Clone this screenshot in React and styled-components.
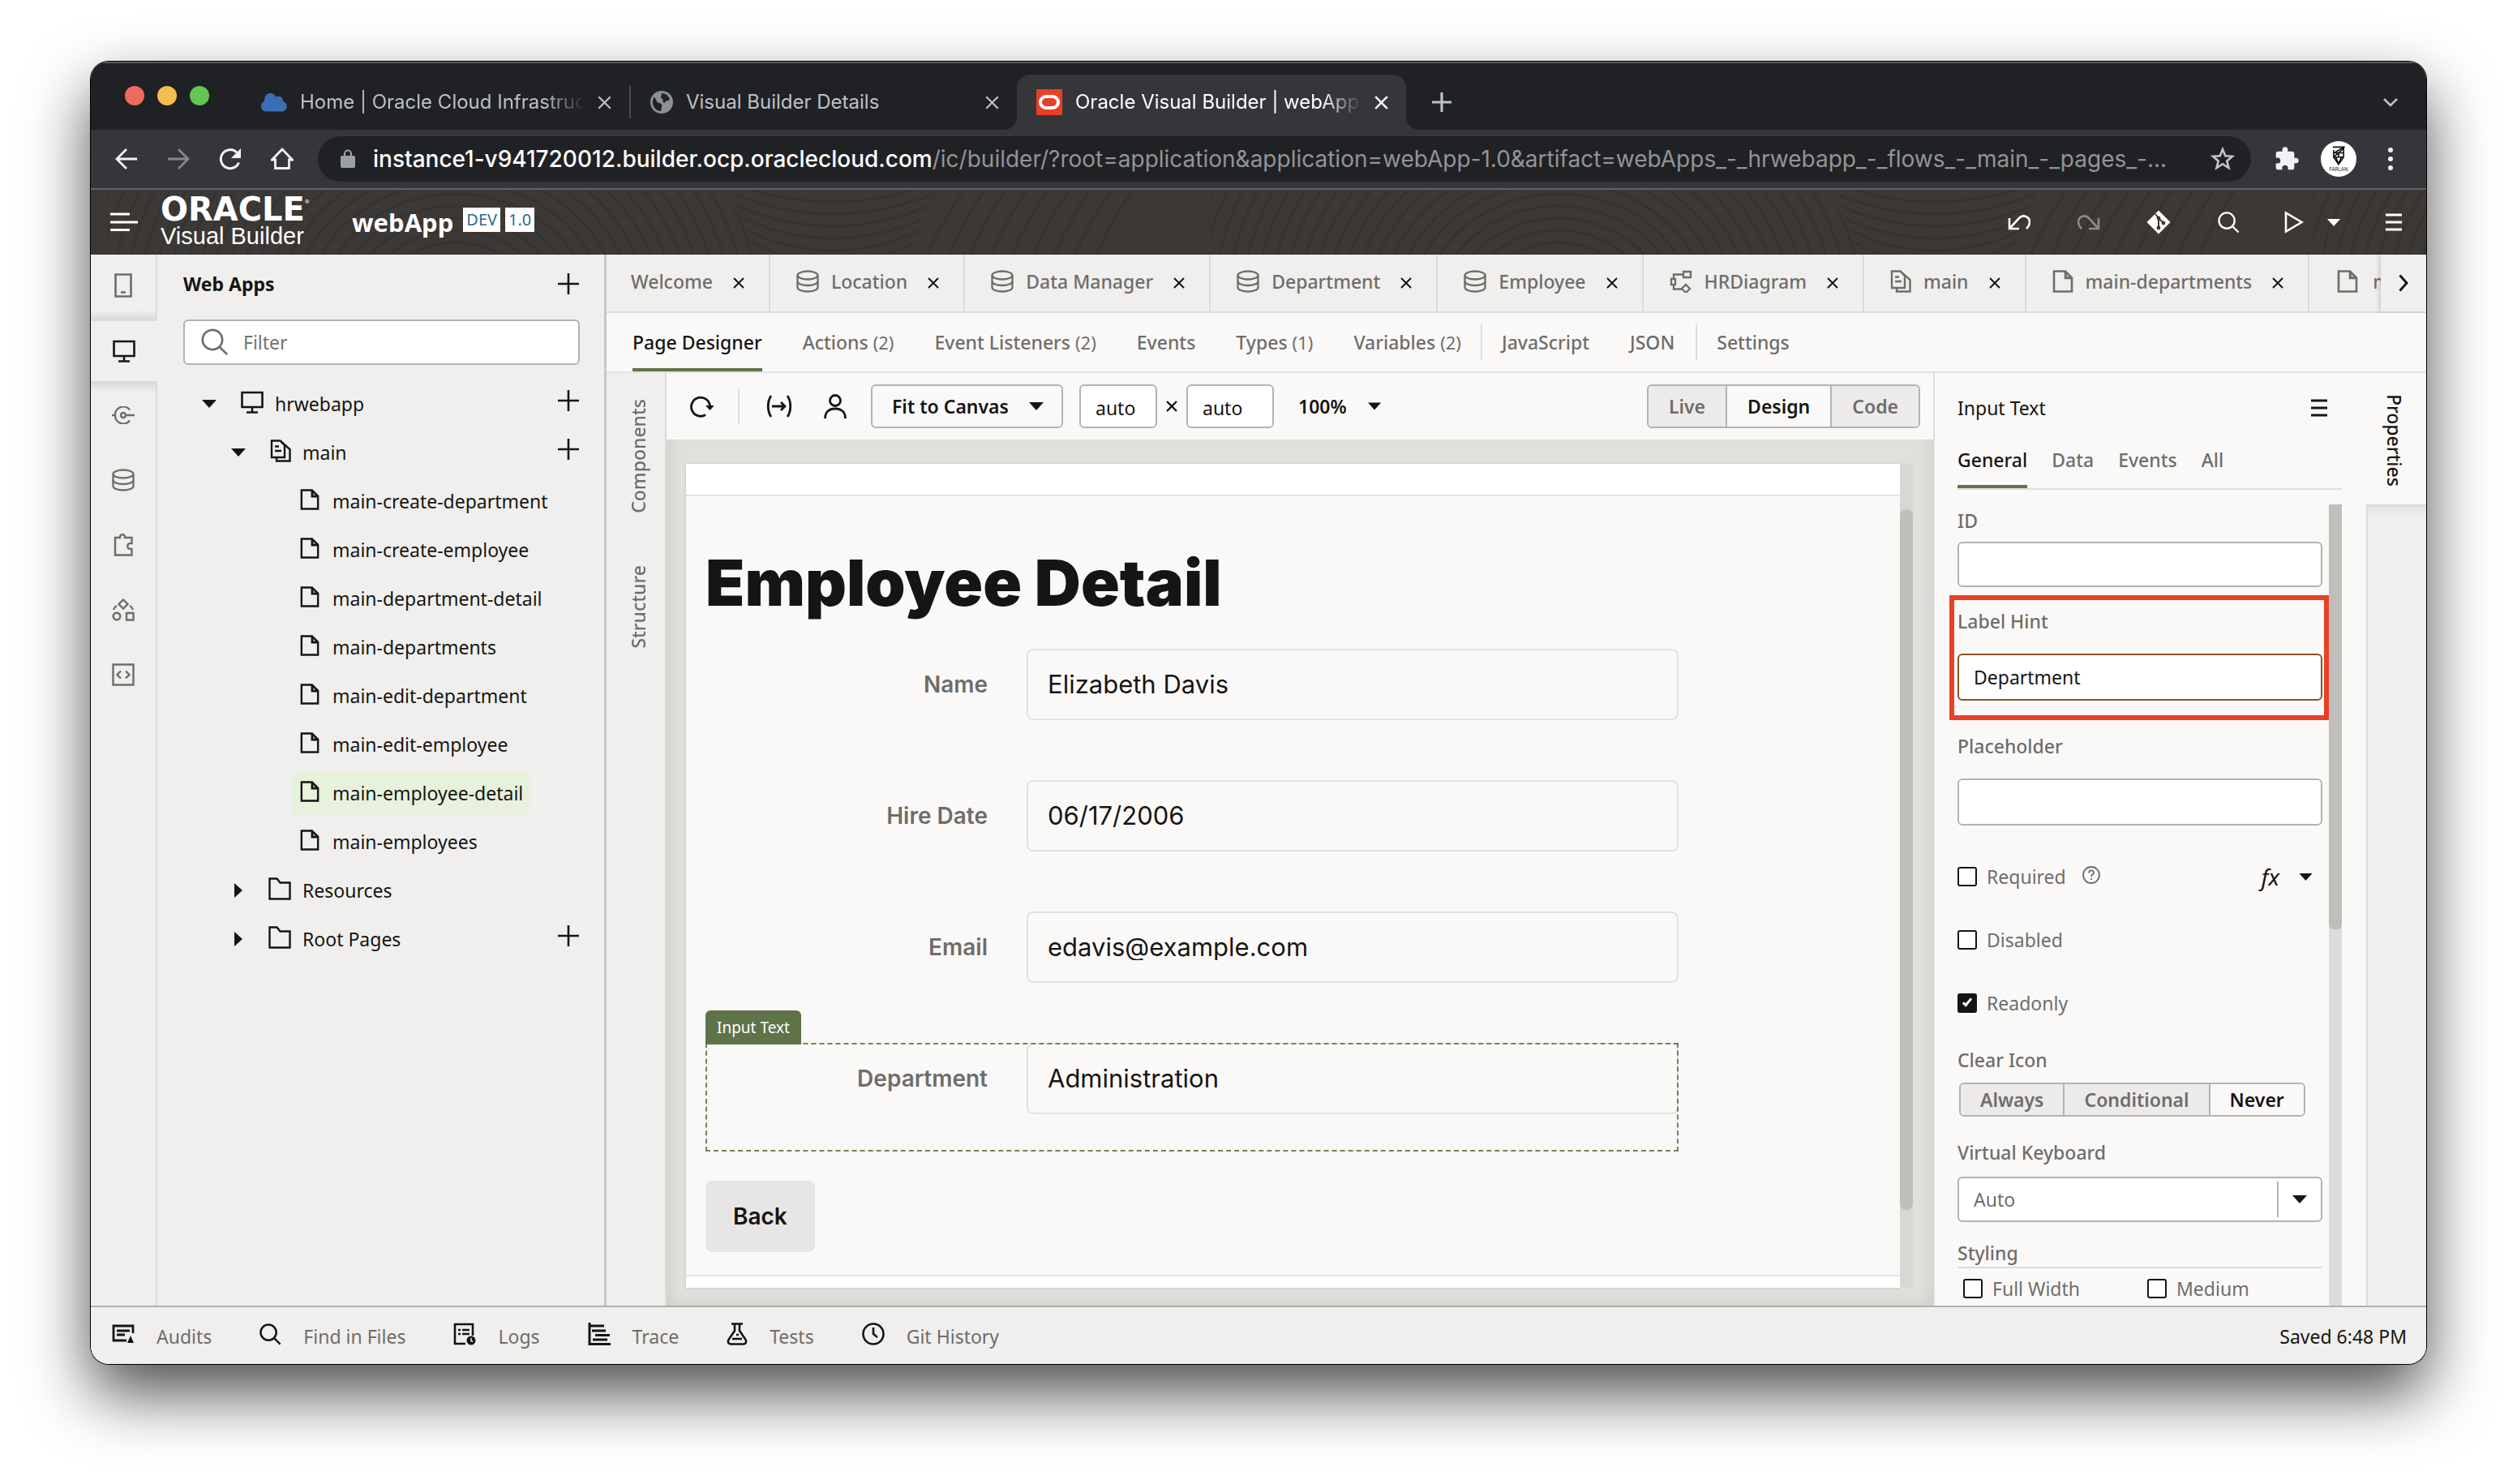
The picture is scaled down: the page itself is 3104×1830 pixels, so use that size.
import React from "react";
import styled, { createGlobalStyle, css } from "styled-components";

const ui = '"Noto Sans", "Open Sans", sans-serif';
const sys = 'Inter, Roboto, sans-serif';
const ink = "#161513";
const muted = "#6f6d6a";
const paper = "#fbf9f8";
const panel = "#f0efed";
const line = "#dddbd9";
const edge = "#b5b3b1";
const green = "#5f7349";

const Global = createGlobalStyle`
  *, *::before, *::after { box-sizing: border-box; }
  body { margin: 0; background: #fff; font: 23px/32px ${ui}; color: ${ink}; }
  button, input, select { font: inherit; color: inherit; margin: 0; }
  button { background: none; border: 0; padding: 0; white-space: nowrap; cursor: pointer; }
  h1, h2, p, ul { margin: 0; padding: 0; }
  ul { list-style: none; }
  svg { display: block; flex: none; }
`;

/* ---------- icons ---------- */
const Glyph = ({ w = 28, h, box, sw = 2, children, fill = "none", stroke = "currentColor" }) => (
  <svg width={w} height={h || w} viewBox={box || `0 0 ${w} ${h || w}`} fill={fill} stroke={stroke} strokeWidth={sw} aria-hidden="true">
    {children}
  </svg>
);
const Cross = ({ s = 14, sw = 2 }) => (
  <Glyph w={s} box="0 0 14 14" sw={sw}><path d="M1 1l12 12M13 1L1 13" /></Glyph>
);
const Plus = () => <Glyph w={28} sw={2.6}><path d="M14 1v26M1 14h26" /></Glyph>;
const Caret = ({ w = 18, h = 10 }) => (
  <Glyph w={w} h={h} box="0 0 18 10" fill="currentColor" stroke="none"><path d="M0 0h18L9 10z" /></Glyph>
);
const CaretRight = () => <Glyph w={10} h={18} fill="currentColor" stroke="none"><path d="M0 0v18l10-9z" /></Glyph>;
const Lens = ({ s = 28, sw = 2.4 }) => (
  <Glyph w={s} box="0 0 28 28" sw={sw}><circle cx="11.5" cy="11.5" r="10" /><path d="M18.5 18.5l8 8" /></Glyph>
);
const Doc = ({ w = 26, sw = 2.6 }) => (
  <Glyph w={w} h={28} box="0 0 26 28" sw={sw}><path d="M2 1.5h14l8 8v17H2z" /><path d="M16 2v8h8" /><path d="M17 3l6 6h-6z" fill="currentColor" strokeWidth="1" fillOpacity=".35" /></Glyph>
);
const Flow = () => (
  <Glyph w={26} h={28} sw={2.4}>
    <path d="M2 1.5h10.500l5.500 5.500v15H2z" /><path d="M6 8.500h5M6 14h8" /><path d="M13.500 2.500L24.500 12v14.500H8V22" />
  </Glyph>
);
const Database = () => (
  <Glyph w={28} sw={2.3}>
    <ellipse cx="14" cy="6.500" rx="12.500" ry="5" /><path d="M1.500 6.500v15c0 2.800 5.600 5 12.500 5s12.500-2.200 12.500-5v-15" /><path d="M1.500 14c0 2.800 5.600 5 12.500 5s12.500-2.200 12.500-5" />
  </Glyph>
);
const Monitor = () => (
  <Glyph w={28} sw={2.6}><path d="M1.500 2h25v18h-25zM14 20v6M7 26.500h14" /></Glyph>
);
const Folder = () => <Glyph w={28} sw={2.4}><path d="M1.500 1.500h9l4 5h12v20h-25z" /></Glyph>;
const Diagram = () => (
  <Glyph w={28} sw={2.3}><path d="M17 2h9v7h-9zM2 11h5v7H2zM17 5.500H5V11M5 18v5.500h10" /><path d="M20 18l5 5-5 5-5-5z" /></Glyph>
);
const Menu = ({ w = 20, g = 9, color = "currentColor" }) => (
  <Glyph w={w} h={22} box={`0 0 ${w} 22`} sw={3} stroke={color}><path d={`M0 ${11 - g}h${w}M0 11h${w}M0 ${11 + g}h${w}`} /></Glyph>
);

/* ---------- window shell ---------- */
const Window = styled.div`
  display: flex; flex-direction: column;
  height: calc(100vh - 224px); min-height: 1000px;
  margin: 76px 112px 148px; border-radius: 22px; overflow: hidden; background: ${panel};
  box-shadow: 0 0 0 1px #000, 0 36px 80px rgba(0, 0, 0, .7);
`;
const Chrome = styled.div`font-family: ${sys}; color: #bdc1c6; background: #202124; box-shadow: inset 0 2px #5b5c5e; flex: none;`;
const TabStrip = styled.div`display: flex; align-items: flex-end; height: 84px; padding: 0 30px 0 42px;`;
const Lights = styled.div`display: flex; gap: 16px; height: 84px; align-items: center; width: 144px;`;
const Light = styled.i`width: 24px; height: 24px; border-radius: 50%; background: ${p => p.$c};`;
const BrowserTab = styled.div`
  display: flex; align-items: center; height: 68px; padding: 0 22px 0 24px; width: ${p => p.$w}px; gap: 16px;
  border-radius: 16px 16px 0 0; position: relative;
  ${p => p.$on && css`
    background: #35363a; color: #fff;
    &::before, &::after { content: ""; position: absolute; bottom: 0; width: 16px; height: 16px; }
    &::before { right: 100%; background: radial-gradient(circle at 0 0, transparent 16px, #35363a 16px); }
    &::after { left: 100%; background: radial-gradient(circle at 100% 0, transparent 16px, #35363a 16px); }
  `}
`;
const BrowserTitle = styled.span`
  flex: 1; min-width: 0; overflow: hidden; white-space: nowrap; font-size: 24px;
  ${p => p.$fade && css`mask-image: linear-gradient(to right, #000 calc(100% - 50px), transparent);`}
`;
const TabRule = styled.i`width: 2px; height: 40px; background: #4a4c50; margin-bottom: 14px;`;
const Slot = styled.button`
  display: flex; align-items: center; justify-content: center; flex: none;
  width: ${p => p.$w || 64}px; height: ${p => p.$h || 68}px; color: ${p => p.$c || "inherit"}; margin-left: ${p => (p.$end ? "auto" : 0)};
`;
const NavBar = styled.div`
  display: flex; align-items: center; height: 74px; padding: 0 12px; color: #f1f3f4;
  background: #35363a; border-bottom: 2px solid #626365;
`;
const Address = styled.div`
  flex: 1; min-width: 0; display: flex; align-items: center; height: 56px; border-radius: 28px; margin: 0 12px 0 12px;
  padding: 0 20px 0 28px; gap: 22px; background: #202124; color: #929497; font-size: 28px;
  b { font-weight: 500; color: #fff; }
`;
const Url = styled.span`flex: 1; min-width: 0; overflow: hidden; white-space: nowrap; text-overflow: ellipsis;`;
const Avatar = styled.span`
  width: 44px; height: 44px; border-radius: 50%; background: #fff; color: #111; margin: 0 10px;
  display: flex; flex-direction: column; align-items: center; justify-content: center;
  small { font-size: 6px; line-height: 8px; }
`;

/* ---------- product header ---------- */
const Header = styled.header`
  position: relative; flex: none; display: flex; align-items: center; height: 80px; padding-left: 24px;
  background: #3c3835; color: #fff;
  > * { position: relative; }
`;
const Rings = styled.svg`&&{ position: absolute; inset: 0; width: 100%; height: 100%; }`;
const Brand = styled.div`margin-left: 28px; width: 236px;`;
const Wordmark = styled.div`
  display: flex; align-items: flex-start; font: 700 40px/34px "DejaVu Sans", sans-serif;
  sup { font: 8px/16px ${sys}; }
`;
const BrandSub = styled.div`font: 29px/32px "Liberation Sans", Arial, sans-serif;`;
const AppName = styled.h2`font-size: 31px; line-height: 40px; font-weight: 700; margin-right: 12px;`;
const Badge = styled.span`
  font-size: 20px; line-height: 30px; height: 30px; padding: 0 4px; margin: 0 6px 6px 0; background: #fff; color: #2d6a8e;
`;
const Tools = styled.div`display: flex; margin-left: auto; align-items: center;`;
const ToolGap = styled.span`width: 23px;`;

/* ---------- body ---------- */
const Body = styled.div`flex: 1; min-height: 0; display: flex;`;
const Rail = styled.nav`width: 82px; flex: none; display: flex; flex-direction: column; color: ${muted};`;
const RailItem = styled.button`
  height: 80px; display: flex; align-items: center; justify-content: center; flex: none;
  border-right: 2px solid ${line};
  ${p => p.$first && css`padding-bottom: 4px; background: linear-gradient(to top, #dcdbd9, ${panel} 12px);`}
  ${p => p.$on && css`height: 78px; color: ${ink}; border: solid ${line}; border-width: 2px 0;`}
  ${p => p.$after && css`background: linear-gradient(to bottom, #dcdbd9, ${panel} 12px);`}
`;
const RailFill = styled.div`flex: 1; border-right: 2px solid ${line};`;
const Sidebar = styled.aside`width: 554px; flex: none; border-right: 3px solid #c9c7c5; padding: 0 30px 0 32px;`;
const SideHead = styled.div`display: flex; justify-content: space-between; align-items: center; height: 72px; h2 { font-size: 23px; }`;
const Filter = styled.label`
  display: flex; align-items: center; gap: 18px; height: 56px; margin: 8px 0 18px; padding: 0 20px;
  border: 2px solid ${edge}; border-radius: 6px; background: #fff; color: ${muted};
  input { border: 0; outline: 0; background: none; width: 100%; padding: 0; }
  input::placeholder { color: #75736f; opacity: 1; }
`;
const Row = styled.li`display: flex; align-items: center; height: 60px; padding-left: ${p => p.$pad}px;`;
const Twist = styled.span`width: ${p => p.$w || 38}px; flex: none; display: flex; justify-content: flex-start;`;
const Leaf = styled.span`
  display: flex; align-items: center; gap: 14px; height: 52px; min-width: 0; padding: 0 8px 0 10px; white-space: nowrap;
  svg { margin-bottom: 4px; }
`;
const PageLeaf = styled(Leaf)`gap: 16px; background: ${p => (p.$on ? "#e6f2dc" : "none")};`;
const AddSlot = styled.button`margin-left: auto; padding-bottom: 8px;`;

const Editor = styled.main`flex: 1; min-width: 0; display: flex; flex-direction: column; background: ${paper};`;
const DocTabs = styled.div`display: flex; height: 72px; flex: none; background: ${panel}; border-bottom: 2px solid ${line};`;
const DocList = styled.div`flex: 1; min-width: 0; overflow: hidden; display: flex;`;
const DocTab = styled.div`
  display: flex; align-items: center; flex: none; padding: 0 30px 4px 32px; gap: 15px; border-right: 2px solid ${line};
  color: ${muted}; font-weight: 500; font-size: 23px;
  &:first-child { padding-left: 30px; }
  &:last-child { padding-left: 34px; gap: 18px; }
  button { color: ${ink}; margin-left: 10px; padding-top: 4px; }
`;
const NextTabs = styled.button`width: 56px; display: flex; align-items: center; justify-content: center; box-shadow: -3px 0 4px rgba(0,0,0,.12);`;
const SubTabs = styled.div`display: flex; align-items: center; height: 74px; flex: none; padding-left: 32px; border-bottom: 2px solid #e4e2e0;`;
const SubTab = styled.button`
  height: 72px; margin-right: ${p => p.$mr || 50}px; padding-top: 4px; color: ${p => (p.$on ? ink : muted)}; font-weight: 500; font-size: 23px;
  border-bottom: 4px solid ${p => (p.$on ? green : "transparent")};
  small { font-size: 22px; font-weight: 400; }
`;
const Bar = styled.i`width: 2px; height: 44px; background: #e0dedc; margin: 0 24px 0 ${p => p.$ml || 0}px;`;

const Stage = styled.div`flex: 1; min-height: 0; display: flex;`;
const SideTabs = styled.div`
  width: 74px; flex: none; display: flex; flex-direction: column; align-items: center; gap: 64px; padding-top: 32px; padding-left: 6px;
  background: ${panel}; border-right: 2px solid ${line}; color: ${muted};
`;
const VText = styled.button`
  writing-mode: vertical-rl; font-weight: 500; line-height: 32px;
  ${p => p.$up && css`transform: rotate(180deg);`}
`;
const Design = styled.section`flex: 1; min-width: 0; display: flex; flex-direction: column;`;
const CanvasBar = styled.div`display: flex; align-items: center; height: 82px; flex: none; padding: 0 16px 0 12px;`;
const Dropdown = styled.span`
  display: flex; align-items: center; height: 54px; position: relative; margin-right: ${p => p.$mr || 0}px;
  select {
    appearance: none; border: ${p => (p.$bare ? 0 : `2px solid ${edge}`)}; border-radius: 6px; background: none; height: 100%;
    width: ${p => p.$w}px; padding: 0 ${p => (p.$bare ? 0 : 24)}px; font-weight: 600; font-size: 23px;
  }
  svg { position: absolute; right: ${p => (p.$bare ? 0 : 24)}px; pointer-events: none; }
`;
const SizeBox = styled.input`
  width: ${p => p.$w}px; height: 54px; border: 2px solid ${edge}; border-radius: 6px; background: #fff; padding: 4px 0 0 18px;
`;
const Times = styled.span`width: 36px; display: flex; justify-content: center;`;
const ZoomSlot = styled.div`margin-left: 30px;`;
const Segments = styled.div`
  display: inline-flex; height: ${p => p.$h}px; border: 2px solid ${edge}; border-radius: 6px; overflow: hidden; margin-left: ${p => (p.$end ? "auto" : "2px")};
  button { padding: 0 ${p => p.$pad || 24}px; }
`;
const Segment = styled.button`
  font-weight: 600; font-size: 23px; color: ${p => (p.$on ? ink : muted)}; background: ${p => (p.$on ? paper : "#edebea")};
  & + & { border-left: 2px solid ${edge}; }
`;
const CanvasArea = styled.div`
  flex: 1; min-height: 0; display: flex; padding: 30px 25px 22px 24px; background: #e1e0dc;
  box-shadow: inset 0 -20px 20px -12px rgba(0,0,0,.04), inset 16px 0 16px -10px rgba(0,0,0,.06), inset -16px 0 16px -10px rgba(0,0,0,.06);
`;
const Page = styled.div`flex: 1; min-width: 0; display: flex; flex-direction: column; background: #fff; box-shadow: 0 0 4px rgba(0,0,0,.14);`;
const PageBody = styled.div`
  flex: 1; margin: 38px 0 14px; border: solid #e6e4e4; border-width: 2px 0; background: ${paper}; padding: 56px 24px 0; font-family: ${sys};
`;
const Title = styled.h1`font-size: 79px; line-height: 100px; font-weight: 900; white-space: nowrap; margin-bottom: 32px;`;
const Form = styled.div`max-width: 1200px;`;
const Field = styled.div`
  display: grid; grid-template-columns: 348px 1fr; column-gap: 48px; height: 88px; margin-bottom: 74px; align-items: stretch; position: relative;
  label { text-align: right; color: ${muted}; font-weight: 600; font-size: 28px; line-height: 88px; }
  input { min-width: 0; width: 100%; border: 2px solid #e4e2e1; border-radius: 8px; background: none; padding: 0 24px; font-size: 31px; }
`;
const Picked = styled.div`position: absolute; inset: 0 0 -46px; border: 2px dashed #6b8457; pointer-events: none;`;
const PickedTag = styled.span`
  position: absolute; left: -2px; bottom: 100%; height: 42px; padding: 0 14px; border-radius: 6px 6px 0 0;
  background: ${green}; color: #fff; font: 19px/42px ${ui}; white-space: nowrap;
`;
const Back = styled.button`height: 88px; padding: 0 34px; margin-top: 8px; border-radius: 8px; background: #e8e6e5; font: 600 28px/32px ${sys};`;
const Track = styled.div`width: 16px; flex: none; background: ${p => p.$bg}; padding-top: ${p => p.$top || 0}px; i { display: block; border-radius: ${p => p.$r}; background: #bfbebb; height: ${p => p.$len}; }`;

/* ---------- property inspector ---------- */
const Inspector = styled.section`width: 534px; flex: none; border-left: 2px solid #e0dedc; display: flex; flex-direction: column; padding: 0 30px 0 28px; min-height: 0;`;
const InspHead = styled.div`display: flex; align-items: center; justify-content: space-between; height: 86px; padding-right: 18px; flex: none;`;
const InspTabs = styled.div`display: flex; gap: 30px; height: 58px; border-bottom: 2px solid #e0dedc; flex: none;`;
const InspTab = styled.button`
  font-weight: 500; font-size: 23px; color: ${p => (p.$on ? ink : muted)}; padding-bottom: 10px;
  border-bottom: 4px solid ${p => (p.$on ? green : "transparent")};
`;
const Scroll = styled.div`flex: 1; min-height: 0; display: flex; overflow: hidden; margin: 18px 0 0 -12px;`;
const Props = styled.div`flex: 1; min-width: 0; overflow: hidden; padding: 4px 8px 0 12px;`;
const Prop = styled.div`
  position: relative; display: flex; flex-direction: column; gap: ${p => p.$gap}px; margin-bottom: ${p => p.$mb}px;
  > label { color: ${muted}; font-weight: 500; }
  > input { height: ${p => p.$h || 58}px; width: 100%; border: 2px solid ${p => (p.$hot ? "#8b5323" : edge)}; border-radius: 6px; background: #fff; padding: 0 18px; }
`;
const Highlight = styled.div`position: absolute; inset: -16px -8px -24px -10px; border: 6px solid #e94025; pointer-events: none;`;
const Check = styled.div`
  display: flex; align-items: center; height: ${p => p.$h || 78}px; color: ${muted}; white-space: nowrap;
  input {
    appearance: none; width: 24px; height: 24px; border: 2px solid ${ink}; border-radius: 3px; background: #fff; margin-right: 12px; flex: none;
    display: grid; place-items: center;
  }
  input:checked { background: ${ink}; }
  input:checked::after { content: ""; width: 6px; height: 12px; margin-bottom: 4px; border: solid #fff; border-width: 0 3px 3px 0; transform: rotate(40deg); }
  > svg { margin: 0 0 4px 20px; }
`;
const Fx = styled.button`
  margin-left: auto; display: flex; align-items: center; gap: 24px; color: ${ink}; font: italic 28px/32px ${ui}; padding-right: 12px;
`;
const Group = styled.div`display: flex; flex-direction: column; align-items: flex-start; gap: 12px; margin-bottom: 28px; color: ${muted}; font-weight: 500;`;
const Spacer = styled.div`height: 15px;`;
const Picker = styled.div`
  position: relative; margin-bottom: 22px;
  label { display: block; color: ${muted}; font-weight: 500; margin-bottom: 14px; }
  select { appearance: none; display: block; width: 100%; height: 56px; border: 2px solid ${edge}; border-radius: 6px; background: #fff; color: ${muted}; padding: 0 18px; }
`;
const PickerCaret = styled.span`
  position: absolute; right: 2px; bottom: 6px; width: 54px; height: 44px; border-left: 2px solid ${edge}; pointer-events: none;
  display: flex; align-items: center; justify-content: center;
`;
const Styling = styled.div`
  h2 { font-size: 23px; font-weight: 500; color: ${muted}; border-bottom: 2px solid ${line}; height: 35px; line-height: 32px; }
  > div { display: grid; grid-template-columns: 227px 1fr; padding-left: 7px; }
`;
const RightRail = styled.div`width: 74px; flex: none; display: flex; flex-direction: column; align-items: stretch;`;
const RightTop = styled.div`height: 162px; flex: none; display: flex; justify-content: center; align-items: flex-start; padding: 26px 4px 0 0;`;
const RightFill = styled.div`flex: 1; border: solid ${line}; border-width: 2px 0 0 2px; background: linear-gradient(to bottom, #e2e1df, ${panel} 12px);`;

const Footer = styled.footer`
  height: 72px; flex: none; display: flex; align-items: center; padding: 2px 24px 0 26px; background: ${panel}; border-top: 2px solid #b1b0ac;
`;
const FootItem = styled.button`
  display: flex; align-items: center; gap: 27px; margin-right: 59px; color: ${muted}; svg { color: ${ink}; margin-bottom: 6px; }
`;
const Saved = styled.span`margin-left: auto;`;

/* ---------- data ---------- */
const pages = ["main-create-department", "main-create-employee", "main-department-detail", "main-departments", "main-edit-department", "main-edit-employee", "main-employee-detail", "main-employees"];
const docs = [["Welcome"], ["Location", Database], ["Data Manager", Database], ["Department", Database], ["Employee", Database], ["HRDiagram", Diagram], ["main", Flow], ["main-departments", Doc]];
const fields = [["Name", "Elizabeth Davis"], ["Hire Date", "06/17/2006"], ["Email", "edavis@example.com"], ["Department", "Administration"]];

const ringSet = (cx, cy, from, n) =>
  Array.from({ length: n }, (_, i) => <ellipse key={`${cx}-${i}`} cx={cx} cy={cy} rx={(from + i * 15) * 1.15} ry={from + i * 15} />);

function RingPattern() {
  return (
    <Rings aria-hidden="true">
      <defs>
        <pattern id="rings" width="1360" height="80" patternUnits="userSpaceOnUse" x="20">
          <rect width="1360" height="80" fill="#3c3835" />
          <g fill="none" stroke="#36322f" strokeWidth="3">
            {ringSet(430, 150, 70, 24)}
            <path d="M760 0h300l-50 80h-200z" fill="#3c3835" stroke="none" />
            {Array.from({ length: 7 }, (_, i) => <path key={i} d={`M${765 + i * 6} ${-10 + i * 15}q${130 - i * 6} 50 ${260 - i * 12} 0`} />)}
            {Array.from({ length: 9 }, (_, i) => <path key={i} d={`M${1060 + i * 26} -4q-30 40 -50 90`} />)}
          </g>
        </pattern>
      </defs>
      <rect width="100%" height="100%" fill="url(#rings)" />
    </Rings>
  );
}

function BrowserChrome() {
  return (
    <Chrome>
      <TabStrip>
        <Lights><Light $c="#ed6a5e" /><Light $c="#f5bf4f" /><Light $c="#62c554" /></Lights>
        <BrowserTab $w={478}>
          <Glyph w={32} h={24} box="0 0 32 24" fill="#3a6fb7" stroke="none"><path d="M6 23.500a6.500 6.500 0 0 1-2-12.500C4 6 6 1 11 1c4 0 6 2 7.500 4.500C23 3.500 27 6 27 11a6.500 6.500 0 0 1 0 12.500z" /></Glyph>
          <BrowserTitle $fade>Home | Oracle Cloud Infrastructure</BrowserTitle>
          <Cross s={17} sw={1.8} />
        </BrowserTab>
        <TabRule />
        <BrowserTab $w={476}>
          <Glyph w={28} fill="#8b9096" stroke="none"><circle cx="14" cy="14" r="14" /><path d="M4 8c5 2 2 6 7 7s3 5 2 10C7 25 2 19 3 12zM14 3c6 0 9 4 10 8-3 2-6 1-6 4-5-1 0-5-5-6z" fill="#202124" /></Glyph>
          <BrowserTitle>Visual Builder Details</BrowserTitle>
          <Cross s={17} sw={1.8} />
        </BrowserTab>
        <BrowserTab $on $w={480}>
          <Glyph w={32} stroke="#fff" sw={4}><rect width="32" height="32" fill="#e93f27" stroke="none" /><rect x="5" y="9" width="22" height="14" rx="7" /></Glyph>
          <BrowserTitle $fade>Oracle Visual Builder | webApp-1.0</BrowserTitle>
          <Cross s={17} sw={2} />
        </BrowserTab>
        <Slot $w={88} aria-label="New tab"><Glyph w={24} sw={3.200}><path d="M12 0v24M0 12h24" /></Glyph></Slot>
        <Slot $w={28} $end aria-label="Search tabs"><Glyph w={18} h={12} sw={2.600}><path d="M1 2l8 8 8-8" /></Glyph></Slot>
      </TabStrip>
      <NavBar>
        <Slot aria-label="Back"><Glyph w={28} sw={2.800}><path d="M27 14H2M14 2L2 14l12 12" /></Glyph></Slot>
        <Slot $c="#87888b" aria-label="Forward"><Glyph w={28} sw={2.800}><path d="M1 14h25M14 2l12 12-12 12" /></Glyph></Slot>
        <Slot aria-label="Reload"><Glyph w={28} sw={3}><path d="M24.500 18.500A11.500 11.500 0 1 1 22 6" /><path d="M27 1v12H15z" fill="currentColor" stroke="none" /></Glyph></Slot>
        <Slot aria-label="Home"><Glyph w={28} sw={2.800}><path d="M1.500 15L14 2l12.500 13h-4v10.500h-17V15z" /></Glyph></Slot>
        <Address>
          <Glyph w={18} h={24} fill="#9aa0a6" stroke="none"><rect y="8" width="18" height="15" rx="2" /><path d="M5 9V5.500a4 4 0 0 1 8 0V9" fill="none" stroke="#9aa0a6" strokeWidth="2.200" /></Glyph>
          <Url><b>instance1-v941720012.builder.ocp.oraclecloud.com</b>/ic/builder/?root=application&amp;application=webApp-1.0&amp;artifact=webApps_-_hrwebapp_-_flows_-_main_-_pages_-...</Url>
          <Glyph w={30} sw={2.600}><path d="M15 3l3.300 8.200 8.700.600-6.700 5.700 2.200 8.500L15 21.200 7.500 26l2.200-8.500L3 11.800l8.700-.600z" stroke="#c4c7ca" /></Glyph>
        </Address>
        <Slot aria-label="Extensions"><Glyph w={32} box="0 0 24 24" fill="currentColor" stroke="none"><path d="M20.500 11H19V7c0-1.100-.9-2-2-2h-4V3.500a2.500 2.500 0 0 0-5 0V5H4c-1.100 0-2 .9-2 2v3.800h1.500a2.700 2.700 0 0 1 0 5.400H2V20c0 1.100.9 2 2 2h3.800v-1.500a2.700 2.700 0 0 1 5.400 0V22H17c1.100 0 2-.9 2-2v-4h1.500a2.500 2.500 0 0 0 0-5z" /></Glyph></Slot>
        <Avatar>
          <Glyph w={16} h={26} box="0 0 18 26" sw={1.800}><path d="M2 1h14v14L9 25 2 15M1 1h15L3 9M2 9h14M2 15h14M2 5v10M9 9v6M3 14L16 3M5 15l4 9 4-9" /></Glyph>
          <small>FARLAN</small>
        </Avatar>
        <Slot aria-label="Browser menu"><Glyph w={6} h={28} fill="currentColor" stroke="none"><circle cx="3" cy="3" r="3" /><circle cx="3" cy="14" r="3" /><circle cx="3" cy="25" r="3" /></Glyph></Slot>
      </NavBar>
    </Chrome>
  );
}

function ProductHeader() {
  return (
    <Header>
      <RingPattern />
      <button aria-label="Navigator"><Glyph w={34} h={24} sw={3} stroke="#fff"><path d="M0 2h24M0 12h34M0 21.500h24" /></Glyph></button>
      <Brand><Wordmark>ORACLE<sup>®</sup></Wordmark><BrandSub>Visual Builder</BrandSub></Brand>
      <AppName>webApp</AppName><Badge>DEV</Badge><Badge>1.0</Badge>
      <Tools>
        <Slot $w={86} aria-label="Undo"><Glyph w={28} h={20} sw={2.600}><path d="M2 5v13h12M2 18L14 5c5-5 13-2 13 5 0 3-1 5-4 8" /></Glyph></Slot>
        <Slot $w={86} $c="#8d8a87" aria-label="Redo"><Glyph w={28} h={20} sw={2.600}><path d="M26 5v13H14M26 18L14 5C9 0 1 3 1 10c0 3 1 5 4 8" /></Glyph></Slot>
        <Slot $w={86} aria-label="Git">
          <Glyph w={30} fill="#fff" stroke="none"><path d="M15 .500L29.500 15 15 29.500.500 15z" /><path d="M11 5l4 5v12M15 10l6 6" stroke="#3c3835" strokeWidth="2" fill="none" /><g fill="#3c3835"><circle cx="15" cy="10" r="2.400" /><circle cx="15" cy="22" r="2.400" /><circle cx="21" cy="16" r="2.400" /></g></Glyph>
        </Slot>
        <Slot $w={86} aria-label="Search"><Lens s={27} /></Slot>
        <Slot $w={76} aria-label="Preview"><Glyph w={24} h={28} sw={2.600}><path d="M2 2.500v23L21.500 14z" /></Glyph></Slot>
        <Slot $w={22} aria-label="Preview options"><Caret w={18} h={9} /></Slot>
        <ToolGap />
        <Slot $w={80} aria-label="More"><Menu w={20} g={9} /></Slot>
      </Tools>
    </Header>
  );
}

function SidePanel() {
  return (
    <>
      <Rail>
        <RailItem $first aria-label="Mobile Apps"><Glyph w={22} h={30} sw={2.600}><path d="M1.500 1.500h19v27h-19z" /><path d="M8 23.500h6" /></Glyph></RailItem>
        <RailItem $on aria-label="Web Apps"><Monitor /></RailItem>
        <RailItem $after aria-label="Services"><Glyph w={28} h={22} sw={2.400}><path d="M22 4.500A10 10 0 0 0 4 11M22 17.500A10 10 0 0 1 4 11H0M17 11h11" /><circle cx="14" cy="11" r="3" /></Glyph></RailItem>
        <RailItem aria-label="Business Objects"><Database /></RailItem>
        <RailItem aria-label="Components"><Glyph w={26} h={28} sw={2.400}><path d="M3 5h6c-1-5 7-5 6 0h8.500v7c-7-1-7 8 0 7v7.500H3z" /></Glyph></RailItem>
        <RailItem aria-label="Processes"><Glyph w={28} sw={2.400}><path d="M14 1.500l5.500 5.500L14 12.500 8.500 7z" /><circle cx="6" cy="22" r="4.300" /><path d="M18 18h8.500v8.500H18zM2 14c.5-2 2-4 4-5M26 14c-.5-2-2-4-4-5" /></Glyph></RailItem>
        <RailItem aria-label="Source"><Glyph w={28} sw={2.400}><path d="M1.500 1.500h25v25h-25zM11 9.500L6.500 14l4.500 4.500M17 9.500l4.500 4.500-4.500 4.500" /></Glyph></RailItem>
        <RailFill />
      </Rail>
      <Sidebar>
        <SideHead><h2>Web Apps</h2><button aria-label="Add app"><Plus /></button></SideHead>
        <Filter><Lens s={34} sw={2.200} /><input aria-label="Filter" placeholder="Filter" /></Filter>
        <ul>
          <Row $pad={23}><Twist><Caret /></Twist><Leaf><Monitor />hrwebapp</Leaf><AddSlot aria-label="Add to hrwebapp"><Plus /></AddSlot></Row>
          <Row $pad={59}><Twist><Caret /></Twist><Leaf><Flow />main</Leaf><AddSlot aria-label="Add to main"><Plus /></AddSlot></Row>
          {pages.map(p => (
            <Row key={p} $pad={134}><PageLeaf $on={p === "main-employee-detail"}><Doc w={24} />{p}</PageLeaf></Row>
          ))}
          <Row $pad={63}><Twist $w={32}><CaretRight /></Twist><Leaf><Folder />Resources</Leaf></Row>
          <Row $pad={63}><Twist $w={32}><CaretRight /></Twist><Leaf><Folder />Root Pages</Leaf><AddSlot aria-label="Add root page"><Plus /></AddSlot></Row>
        </ul>
      </Sidebar>
    </>
  );
}

function Designer() {
  return (
    <Design>
      <CanvasBar>
        <Slot $w={62} $h={54} aria-label="Reload canvas"><Glyph w={30} h={28} sw={2.800}><path d="M20 24.500A11.500 11.500 0 1 1 25.500 14" /><path d="M20 13h11l-5.500 6z" fill="currentColor" stroke="none" /></Glyph></Slot>
        <Bar $ml={14} />
        <Slot $w={50} $h={54} aria-label="Fit width"><Glyph w={32} h={28} sw={2.800}><path d="M6 1C1 8 1 20 6 27M26 1c5 7 5 19 0 26M7 14h16M18 9l5 5-5 5" /></Glyph></Slot>
        <Slot $w={88} $h={54} aria-label="User role"><Glyph w={28} h={30} sw={2.800}><circle cx="14" cy="8" r="6.500" /><path d="M1.500 30c0-8 5-12 12.500-12s12.500 4 12.500 12" /></Glyph></Slot>
        <Dropdown $w={237} $mr={20}><select aria-label="Device size"><option>Fit to Canvas</option></select><Caret w={18} h={10} /></Dropdown>
        <SizeBox $w={96} aria-label="Width" defaultValue="auto" />
        <Times><Cross s={14} sw={2.400} /></Times>
        <SizeBox $w={108} aria-label="Height" defaultValue="auto" />
        <ZoomSlot><Dropdown $bare $w={102}><select aria-label="Zoom"><option>100%</option></select><Caret w={16} h={10} /></Dropdown></ZoomSlot>
        <Segments $h={54} $pad={25} $end><Segment>Live</Segment><Segment $on>Design</Segment><Segment>Code</Segment></Segments>
      </CanvasBar>
      <CanvasArea>
        <Page>
          <PageBody>
            <Title>Employee Detail</Title>
            <Form>
              {fields.map(([k, v]) => (
                <Field key={k}>
                  <label htmlFor={`f-${k}`}>{k}</label>
                  <input id={`f-${k}`} readOnly value={v} />
                  {k === "Department" && <Picked><PickedTag>Input Text</PickedTag></Picked>}
                </Field>
              ))}
            </Form>
            <Back>Back</Back>
          </PageBody>
        </Page>
        <Track $bg="#d8d7d3" $top={56} $len="90%" $r="8px"><i /></Track>
      </CanvasArea>
    </Design>
  );
}

function PropertyInspector() {
  return (
    <>
      <Inspector>
        <InspHead><span>Input Text</span><button aria-label="Component menu"><Menu w={20} g={9} /></button></InspHead>
        <InspTabs><InspTab $on>General</InspTab><InspTab>Data</InspTab><InspTab>Events</InspTab><InspTab>All</InspTab></InspTabs>
        <Scroll>
          <Props>
            <Prop $gap={10} $mb={26} $h={56}><label htmlFor="p-id">ID</label><input id="p-id" /></Prop>
            <Prop $gap={24} $mb={40} $hot><label htmlFor="p-hint">Label Hint</label><input id="p-hint" defaultValue="Department" /><Highlight /></Prop>
            <Prop $gap={24} $mb={24}><label htmlFor="p-ph">Placeholder</label><input id="p-ph" /></Prop>
            <Check>
              <input type="checkbox" id="c-req" /><label htmlFor="c-req">Required</label>
              <Glyph w={22} sw={1.800}><circle cx="11" cy="11" r="10" /><path d="M8 8.500c0-4 6-4 6-.500 0 2.500-3 2.500-3 5M11 15v2" /></Glyph>
              <Fx aria-label="Expression options">fx<Caret w={17} h={9} /></Fx>
            </Check>
            <Check><input type="checkbox" id="c-dis" /><label htmlFor="c-dis">Disabled</label></Check>
            <Check><input type="checkbox" id="c-ro" defaultChecked /><label htmlFor="c-ro">Readonly</label></Check>
            <Spacer />
            <Group role="group" aria-label="Clear Icon">
              <span>Clear Icon</span>
              <Segments $h={42}><Segment>Always</Segment><Segment>Conditional</Segment><Segment $on>Never</Segment></Segments>
            </Group>
            <Picker><label htmlFor="p-vk">Virtual Keyboard</label><select id="p-vk"><option>Auto</option></select><PickerCaret><Caret w={18} h={10} /></PickerCaret></Picker>
            <Styling>
              <h2>Styling</h2>
              <div>
                <Check $h={50}><input type="checkbox" id="c-fw" /><label htmlFor="c-fw">Full Width</label></Check>
                <Check $h={50}><input type="checkbox" id="c-md" /><label htmlFor="c-md">Medium</label></Check>
              </div>
            </Styling>
          </Props>
          <Track $bg="#dddcda" $len="53%" $r="0 0 6px 6px"><i /></Track>
        </Scroll>
      </Inspector>
      <RightRail><RightTop><VText>Properties</VText></RightTop><RightFill /></RightRail>
    </>
  );
}

function StatusBar() {
  return (
    <Footer>
      <FootItem><Glyph w={28} h={24} sw={2.800}><path d="M18 20H2V2h24v9M6 8h16M6 13h10" /><path d="M23 14l4 9h-8z" fill="currentColor" stroke="none" /></Glyph>Audits</FootItem>
      <FootItem><Lens s={27} sw={2.600} />Find in Files</FootItem>
      <FootItem><Glyph w={28} sw={2.600}><path d="M15 26H2V2h22v14M6 9h3M11 9h9M6 14h3M11 14h9" /><circle cx="22" cy="22" r="5.500" fill="currentColor" stroke="none" /><path d="M22 19v3.500l2 1" stroke="#f0efed" strokeWidth="1.500" /></Glyph>Logs</FootItem>
      <FootItem><Glyph w={28} sw={3}><path d="M2 0v26.500h26M2 4h18M5 10h17M9 15.500h18M6 21h18" /></Glyph>Trace</FootItem>
      <FootItem><Glyph w={26} h={28} sw={2.600}><path d="M6 1.500h14M10 2v8L2.500 21c-1.500 3 0 5.500 3 5.500h15c3 0 4.500-2.500 3-5.500L16 10V2" /><path d="M7 20h12M12 15h3" /></Glyph>Tests</FootItem>
      <FootItem><Glyph w={28} sw={2.600}><circle cx="14" cy="14" r="12.500" /><path d="M14 6v8l5 4" /></Glyph>Git History</FootItem>
      <Saved>Saved 6:48 PM</Saved>
    </Footer>
  );
}

export default function App() {
  return (
    <>
      <Global />
      <Window>
        <BrowserChrome />
        <ProductHeader />
        <Body>
          <SidePanel />
          <Editor>
            <DocTabs>
              <DocList>
                {docs.map(([name, Icon]) => (
                  <DocTab key={name}>{Icon && <Icon />}<span>{name}</span><button aria-label={`Close ${name}`}><Cross s={14} sw={2} /></button></DocTab>
                ))}
                <DocTab><Doc /><span>main-employees</span></DocTab>
              </DocList>
              <NextTabs aria-label="More tabs"><Glyph w={12} h={22} sw={3}><path d="M1.500 1.500L10 11l-8.500 9.500" /></Glyph></NextTabs>
            </DocTabs>
            <SubTabs>
              <SubTab $on>Page Designer</SubTab>
              <SubTab>Actions <small>(2)</small></SubTab>
              <SubTab>Event Listeners <small>(2)</small></SubTab>
              <SubTab>Events</SubTab>
              <SubTab>Types <small>(1)</small></SubTab>
              <SubTab $mr={24}>Variables <small>(2)</small></SubTab>
              <Bar />
              <SubTab>JavaScript</SubTab>
              <SubTab $mr={26}>JSON</SubTab>
              <Bar />
              <SubTab>Settings</SubTab>
            </SubTabs>
            <Stage>
              <SideTabs><VText $up>Components</VText><VText $up>Structure</VText></SideTabs>
              <Designer />
              <PropertyInspector />
            </Stage>
          </Editor>
        </Body>
        <StatusBar />
      </Window>
    </>
  );
}
